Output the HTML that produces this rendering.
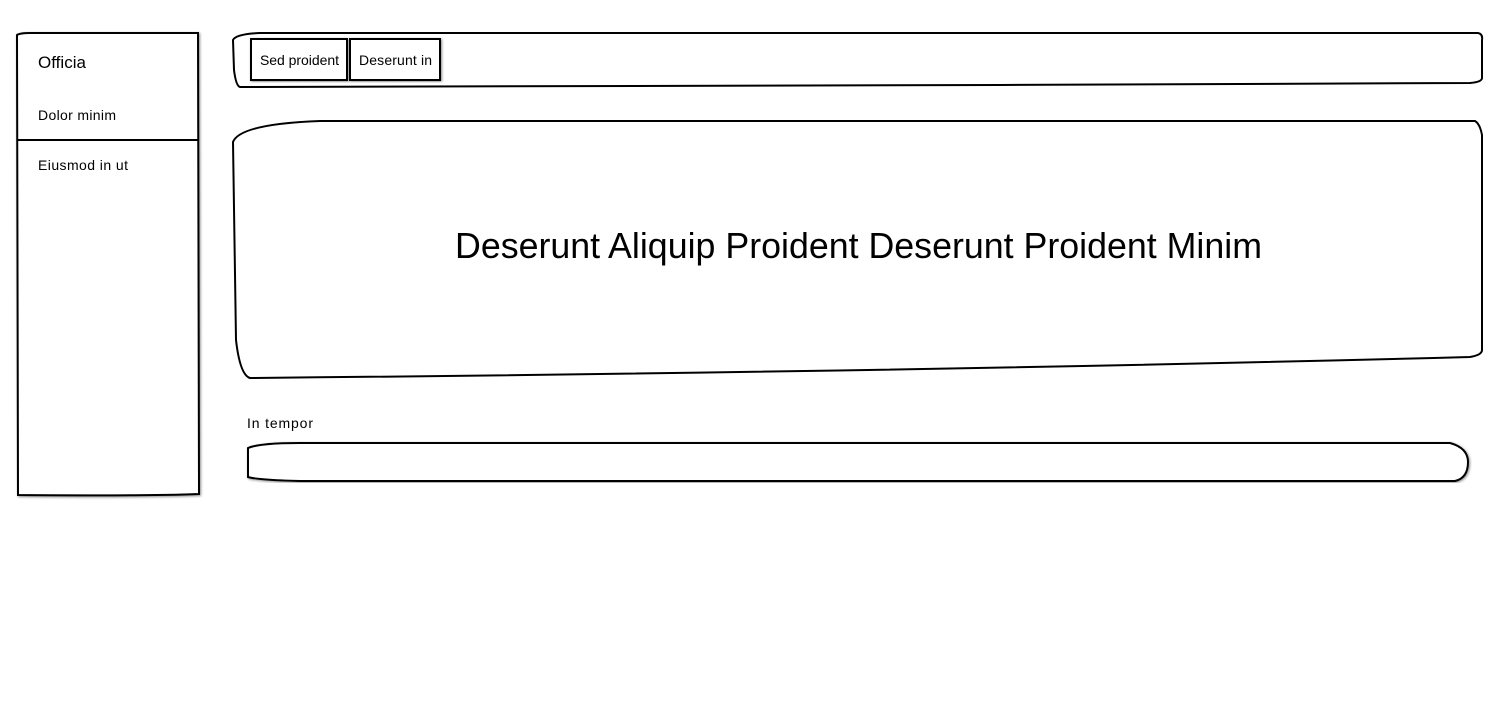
<!DOCTYPE html>
<html><head><meta charset="utf-8"><style>
html,body{margin:0;padding:0;background:#fff;width:1500px;height:720px;overflow:hidden}
svg text{font-family:"Liberation Sans",sans-serif;fill:#000}
</style></head><body>
<svg width="1500" height="720" viewBox="0 0 1500 720" xmlns="http://www.w3.org/2000/svg">
<defs><filter id="sh" x="-5%" y="-5%" width="110%" height="110%"><feDropShadow dx="1" dy="1" stdDeviation="1.2" flood-color="#000" flood-opacity="0.45"/></filter></defs>
<g fill="#fff" stroke="#000" stroke-width="2">
<path filter="url(#sh)" d="M17 35 Q20 33 30 33 L198 33 L199 494 Q150 496 18 495 Z"/>
<path d="M17 140 L199 140" fill="none"/>
<path d="M233 40 Q236 34 260 33 L1478 33 Q1483 34 1482 40 L1482 78 Q1482 82 1470 83 L1000 85 Q600 87 240 87 Q236 86 234 70 Z"/>
<path filter="url(#sh)" d="M251 39 L347 39 L347 80 L251 80 Z"/>
<path filter="url(#sh)" d="M350 39 L440 39 L440 80 L350 80 Z"/>
<path d="M233 142 Q240 124 320 121 L1475 121 Q1480 124 1482 135 L1482 350 Q1482 355 1470 357 Q900 372 250 378 Q240 375 236 340 Z"/>
<path filter="url(#sh)" d="M248 448 Q260 443 300 443 L1450 443 Q1468 448 1468 462 Q1468 478 1455 481 L300 481 Q258 480 248 477 Z"/>
</g>
<text x="38" y="68" font-size="17" textLength="48">Officia</text>
<text x="38" y="120" font-size="14" textLength="78">Dolor minim</text>
<text x="38" y="170" font-size="14" textLength="90">Eiusmod in ut</text>
<text x="260" y="65" font-size="14" textLength="79">Sed proident</text>
<text x="359" y="65" font-size="14" textLength="73">Deserunt in</text>
<text x="455" y="258" font-size="36" textLength="807" lengthAdjust="spacingAndGlyphs">Deserunt Aliquip Proident Deserunt Proident Minim</text>
<text x="247" y="428" font-size="14" textLength="66">In tempor</text>
</svg>
</body></html>
